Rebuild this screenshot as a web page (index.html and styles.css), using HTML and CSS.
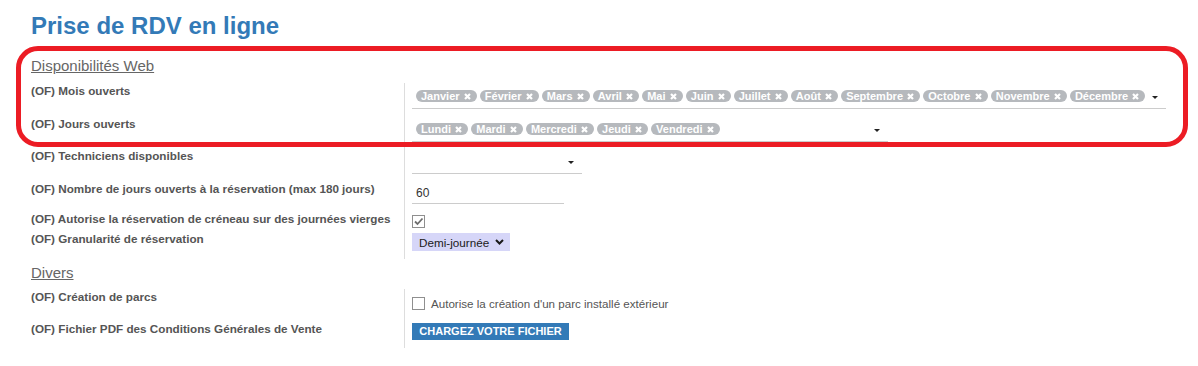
FILE: index.html
```html
<!DOCTYPE html>
<html lang="fr">
<head>
<meta charset="utf-8">
<title>Prise de RDV en ligne</title>
<link rel="stylesheet" href="styles.css">
</head>
<body>
<div class="page">
  <h1 class="title">Prise de RDV en ligne</h1>

  <section class="group group-web">
    <h2 class="group-title">Disponibilités Web</h2>
    <div class="form">
      <div class="row row-mois">
        <div class="label">(OF) Mois ouverts</div>
        <div class="field">
          <div class="multi multi-mois">
            <div class="tags">
              <span class="tag">Janvier<svg class="x" viewBox="0 0 7 7"><path d="M1 1L6 6M6 1L1 6"/></svg></span>
              <span class="tag">Février<svg class="x" viewBox="0 0 7 7"><path d="M1 1L6 6M6 1L1 6"/></svg></span>
              <span class="tag">Mars<svg class="x" viewBox="0 0 7 7"><path d="M1 1L6 6M6 1L1 6"/></svg></span>
              <span class="tag">Avril<svg class="x" viewBox="0 0 7 7"><path d="M1 1L6 6M6 1L1 6"/></svg></span>
              <span class="tag">Mai<svg class="x" viewBox="0 0 7 7"><path d="M1 1L6 6M6 1L1 6"/></svg></span>
              <span class="tag">Juin<svg class="x" viewBox="0 0 7 7"><path d="M1 1L6 6M6 1L1 6"/></svg></span>
              <span class="tag">Juillet<svg class="x" viewBox="0 0 7 7"><path d="M1 1L6 6M6 1L1 6"/></svg></span>
              <span class="tag">Août<svg class="x" viewBox="0 0 7 7"><path d="M1 1L6 6M6 1L1 6"/></svg></span>
              <span class="tag">Septembre<svg class="x" viewBox="0 0 7 7"><path d="M1 1L6 6M6 1L1 6"/></svg></span>
              <span class="tag">Octobre<svg class="x" viewBox="0 0 7 7"><path d="M1 1L6 6M6 1L1 6"/></svg></span>
              <span class="tag">Novembre<svg class="x" viewBox="0 0 7 7"><path d="M1 1L6 6M6 1L1 6"/></svg></span>
              <span class="tag">Décembre<svg class="x" viewBox="0 0 7 7"><path d="M1 1L6 6M6 1L1 6"/></svg></span>
            </div>
            <span class="caret"></span>
          </div>
        </div>
      </div>

      <div class="row row-jours">
        <div class="label">(OF) Jours ouverts</div>
        <div class="field">
          <div class="multi multi-jours">
            <div class="tags">
              <span class="tag">Lundi<svg class="x" viewBox="0 0 7 7"><path d="M1 1L6 6M6 1L1 6"/></svg></span>
              <span class="tag">Mardi<svg class="x" viewBox="0 0 7 7"><path d="M1 1L6 6M6 1L1 6"/></svg></span>
              <span class="tag">Mercredi<svg class="x" viewBox="0 0 7 7"><path d="M1 1L6 6M6 1L1 6"/></svg></span>
              <span class="tag">Jeudi<svg class="x" viewBox="0 0 7 7"><path d="M1 1L6 6M6 1L1 6"/></svg></span>
              <span class="tag">Vendredi<svg class="x" viewBox="0 0 7 7"><path d="M1 1L6 6M6 1L1 6"/></svg></span>
            </div>
            <span class="caret"></span>
          </div>
        </div>
      </div>

      <div class="row row-tech">
        <div class="label">(OF) Techniciens disponibles</div>
        <div class="field">
          <div class="multi multi-tech">
            <div class="tags"></div>
            <span class="caret"></span>
          </div>
        </div>
      </div>

      <div class="row row-nb">
        <div class="label">(OF) Nombre de jours ouverts à la réservation (max 180 jours)</div>
        <div class="field">
          <div class="input">60</div>
        </div>
      </div>

      <div class="row row-vierge">
        <div class="label">(OF) Autorise la réservation de créneau sur des journées vierges</div>
        <div class="field">
          <span class="check checked"><svg viewBox="0 0 11 11"><path d="M2 5.5L4.5 8L9.5 2.5"/></svg></span>
        </div>
      </div>

      <div class="row row-gran">
        <div class="label">(OF) Granularité de réservation</div>
        <div class="field">
          <div class="select">
            <span>Demi-journée</span>
            <svg class="chev" viewBox="0 0 9 6"><path d="M1 1L4.5 4.5L8 1"/></svg>
          </div>
        </div>
      </div>
    </div>
  </section>

  <section class="group group-divers">
    <h2 class="group-title">Divers</h2>
    <div class="form">
      <div class="row row-parcs">
        <div class="label">(OF) Création de parcs</div>
        <div class="field">
          <div class="check-line">
            <span class="check"></span>
            <span class="check-text">Autorise la création d'un parc installé extérieur</span>
          </div>
        </div>
      </div>
      <div class="row row-pdf">
        <div class="label">(OF) Fichier PDF des Conditions Générales de Vente</div>
        <div class="field">
          <div class="btn">CHARGEZ VOTRE FICHIER</div>
        </div>
      </div>
    </div>
  </section>

  <div class="highlight"></div>
</div>
</body>
</html>
```

FILE: styles.css
```css
* { box-sizing: border-box; }

html, body {
  margin: 0;
  padding: 0;
  background: #ffffff;
}

body {
  font-family: "Liberation Sans", Arial, sans-serif;
  color: #555555;
}

.page {
  position: relative;
  width: 1198px;
  height: 366px;
  padding: 12px 0 0 31px;
}

.title {
  margin: 0;
  font-size: 24px;
  line-height: 28px;
  font-weight: bold;
  color: #337ab7;
}

.group-title {
  margin: 0;
  font-size: 15px;
  line-height: 18px;
  font-weight: normal;
  color: #666666;
  text-decoration: underline;
}

.group-web { margin-top: 17px; }
.group-web .group-title { margin-bottom: 8px; }

.group-divers { margin-top: 5px; }
.group-divers .group-title { margin-bottom: 7px; }

.row {
  display: grid;
  grid-template-columns: 373px 1fr;
}

.label {
  font-size: 11.7px;
  line-height: 16px;
  font-weight: bold;
  color: #555555;
  white-space: nowrap;
}

.field {
  border-left: 1px solid #dddddd;
  padding-left: 7px;
}

.row-mois { height: 33px; }
.row-jours { height: 32px; }
.row-tech { height: 33px; }
.row-nb { height: 30px; }
.row-vierge { height: 20px; }
.row-gran { height: 28px; }
.row-parcs { height: 32px; }
.row-pdf { height: 27px; }

/* multi-select */
.multi {
  display: flex;
  align-items: center;
  padding: 7px 8px 6px 4px;
  border-bottom: 1px solid #cccccc;
  min-height: 26px;
}
.multi-mois { width: 754px; }
.multi-jours { width: 476px; }
.multi-tech { width: 170px; }

.tags {
  display: flex;
  gap: 3px;
  height: 12px;
  flex: none;
}

.tag {
  display: inline-flex;
  align-items: center;
  height: 12px;
  padding: 0 6px 0 5px;
  border-radius: 6px;
  background: #b6b9bd;
  color: #ffffff;
  font-size: 11px;
  line-height: 12px;
  font-weight: bold;
  white-space: nowrap;
}

.x {
  width: 7px;
  height: 7px;
  margin-left: 4.3px;
  fill: none;
  stroke: #ffffff;
  stroke-width: 2.2;
}

.caret {
  margin-left: auto;
  margin-top: 2px;
  width: 0;
  height: 0;
  border-left: 3px solid transparent;
  border-right: 3px solid transparent;
  border-top: 3px solid #222222;
}

/* text input */
.input {
  width: 152px;
  padding: 5px 4px 3px;
  font-size: 12px;
  line-height: 14px;
  color: #333333;
  border-bottom: 1px solid #cccccc;
}

/* checkbox */
.check {
  display: inline-block;
  width: 13px;
  height: 13px;
  border: 1px solid #8f8f8f;
  background: #ffffff;
  flex: none;
}
.check svg {
  display: block;
  width: 11px;
  height: 11px;
  fill: none;
  stroke: #6e6e6e;
  stroke-width: 1.8;
}
.row-vierge .check { margin-top: 4px; }

/* select */
.select {
  display: flex;
  align-items: center;
  justify-content: space-between;
  width: 98px;
  height: 18px;
  margin-top: 2px;
  padding: 0 6px 0 7px;
  background: #d6d6f8;
  font-size: 11.7px;
  color: #1a1a1a;
}
.chev {
  width: 9px;
  height: 6px;
  fill: none;
  stroke: #1a1a1a;
  stroke-width: 2;
}

/* divers */
.check-line {
  display: flex;
  align-items: center;
  gap: 6px;
  margin-top: 8px;
}
.check-text {
  font-size: 11.6px;
  color: #555555;
}

.btn {
  display: inline-block;
  width: 157px;
  height: 17px;
  margin-top: 1px;
  background: #337ab7;
  color: #ffffff;
  font-size: 11px;
  line-height: 17px;
  font-weight: bold;
  text-align: center;
  white-space: nowrap;
}

/* red annotation frame */
.highlight {
  position: absolute;
  left: 16px;
  top: 46px;
  width: 1172px;
  height: 101px;
  border: 5px solid #ec1c24;
  border-radius: 22px;
  pointer-events: none;
}
```
